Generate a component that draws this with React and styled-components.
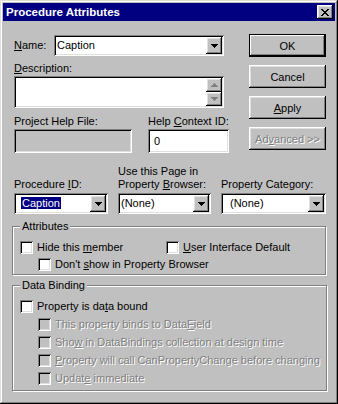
import React from 'react';
import styled, { createGlobalStyle } from 'styled-components';

const GlobalStyle = createGlobalStyle`
  html, body {
    margin: 0;
    padding: 0;
    background: #c0c0c0;
  }
  body {
    font-family: "Liberation Sans", Arial, sans-serif;
    font-size: 11px;
    color: #000;
  }
`;

const raised = `
  background: #c0c0c0;
  box-shadow: inset -1px -1px #000, inset 1px 1px #fff, inset -2px -2px #808080, inset 2px 2px #dfdfdf;
`;

const sunken = `
  box-shadow: inset 1px 1px #808080, inset -1px -1px #fff, inset 2px 2px #000, inset -2px -2px #dfdfdf;
`;

const Window = styled.div`
  width: 338px;
  height: 404px;
  box-sizing: border-box;
  padding: 3px;
  background: #c0c0c0;
  box-shadow: inset -1px -1px #000, inset 1px 1px #dfdfdf, inset -2px -2px #808080, inset 2px 2px #fff;
  display: flex;
  flex-direction: column;
`;

const TitleBar = styled.div`
  height: 18px;
  background: #000080;
  display: flex;
  align-items: center;
  justify-content: space-between;
  padding: 0 2px 0 3px;
`;

const Title = styled.span`
  color: #fff;
  font-weight: bold;
  font-size: 11.5px;
  line-height: 18px;
`;

const CloseButton = styled.span`
  ${raised}
  width: 16px;
  height: 14px;
  display: flex;
  align-items: center;
  justify-content: center;
`;

const Body = styled.div`
  flex: 1;
  padding: 14px 9px 0 9px;
  display: flex;
  flex-direction: column;
`;

const Top = styled.div`
  display: flex;
`;

const LeftCol = styled.div`
  width: 210px;
  margin-left: 2px;
  display: flex;
  flex-direction: column;
`;

const ButtonCol = styled.div`
  width: 77px;
  margin-left: auto;
  margin-top: -1px;
  display: flex;
  flex-direction: column;
  gap: 8px;
`;

const Button = styled.div`
  ${raised}
  height: 23px;
  display: flex;
  align-items: center;
  justify-content: center;
  ${p => p.$default && `
    box-shadow: inset 0 0 0 1px #000, inset -2px -2px #000, inset 2px 2px #fff, inset -3px -3px #808080;
  `}
  ${p => p.$disabled && `
    color: #808080;
    text-shadow: 1px 1px 0 #fff;
  `}
`;

const Label = styled.div`
  line-height: 13px;
  white-space: nowrap;
  ${p => p.$disabled && `
    color: #808080;
    text-shadow: 1px 1px 0 #fff;
  `}
`;

const Key = styled.u`
  text-decoration: underline;
`;

const NameRow = styled.div`
  display: flex;
  align-items: center;
  height: 21px;
  & > ${Label} {
    width: 40px;
  }
`;

const Combo = styled.div`
  ${sunken}
  background: #fff;
  box-sizing: border-box;
  height: 21px;
  padding: 2px;
  display: flex;
  align-items: center;
  flex: ${p => (p.$grow ? 1 : 'none')};
`;

const ComboText = styled.span`
  flex: 1;
  padding-left: ${p => p.$indent}px;
  line-height: 13px;
  white-space: nowrap;
`;

const Selected = styled.span`
  background: #000080;
  color: #fff;
  padding: 0 1px;
`;

const DropButton = styled.span`
  ${raised}
  width: 16px;
  height: 17px;
  display: flex;
  align-items: center;
  justify-content: center;
`;

const DescLabel = styled(Label)`
  margin-top: 6px;
`;

const TextArea = styled.div`
  ${sunken}
  background: #fff;
  box-sizing: border-box;
  height: 32px;
  margin-top: 1px;
  padding: 2px;
  display: flex;
  justify-content: flex-end;
`;

const Spin = styled.div`
  width: 16px;
  display: flex;
  flex-direction: column;
`;

const SpinButton = styled.span`
  ${raised}
  flex: 1;
  display: flex;
  align-items: center;
  justify-content: center;
`;

const HelpGrid = styled.div`
  display: grid;
  grid-template-columns: 118px 1fr;
  column-gap: 16px;
  row-gap: 1px;
  margin-top: 7px;
`;

const Field = styled.div`
  ${sunken}
  box-sizing: border-box;
  height: 24px;
  padding: 2px 2px 2px ${p => p.$indent || 3}px;
  display: flex;
  align-items: center;
  background: ${p => (p.$disabled ? '#c0c0c0' : '#fff')};
`;

const ComboGrid = styled.div`
  display: grid;
  grid-template-columns: 94px 93px 105px;
  justify-content: space-between;
  align-items: end;
  row-gap: 2px;
  margin: 12px 0 0 2px;
`;

const Group = styled.fieldset`
  margin: ${p => p.$gap}px 0 0 0;
  padding: ${p => p.$pad};
  border: 1px solid #808080;
  box-shadow: inset 1px 1px #fff, 1px 1px #fff;
  display: flex;
  flex-direction: column;
  gap: ${p => p.$rowGap}px;
`;

const Legend = styled.legend`
  padding: 0 2px;
  line-height: 13px;
  background: #c0c0c0;
`;

const Row = styled.div`
  display: flex;
  align-items: center;
  padding-left: ${p => p.$indent || 0}px;
`;

const CheckItem = styled.div`
  display: flex;
  align-items: center;
  gap: 4px;
  height: 13px;
  width: ${p => (p.$width ? `${p.$width}px` : 'auto')};
`;

const Box = styled.span`
  ${sunken}
  width: 13px;
  height: 13px;
  flex: none;
  background: ${p => (p.$disabled ? '#c0c0c0' : '#fff')};
`;

const Arrow = ({ up, color = '#000' }) => (
  <svg width="7" height="4" viewBox="0 0 7 4">
    <path d={up ? 'M3 0h1v1h1v1h1v1h1v1H0V3h1V2h1V1h1z' : 'M0 0h7v1H6v1H5v1H4v1H3V3H2V2H1V1H0z'} fill={color} />
  </svg>
);

const CloseGlyph = () => (
  <svg width="8" height="7" viewBox="0 0 8 7">
    <path
      d="M0 0h2v1H0zM6 0h2v1H6zM1 1h2v1H1zM5 1h2v1H5zM2 2h4v1H2zM3 3h2v1H3zM2 4h4v1H2zM1 5h2v1H1zM5 5h2v1H5zM0 6h2v1H0zM6 6h2v1H6z"
      fill="#000"
    />
  </svg>
);

const ComboBox = ({ children, indent = 2, grow }) => (
  <Combo $grow={grow}>
    <ComboText $indent={indent}>{children}</ComboText>
    <DropButton>
      <Arrow />
    </DropButton>
  </Combo>
);

const Check = ({ children, disabled, width }) => (
  <CheckItem $width={width}>
    <Box $disabled={disabled} />
    <Label $disabled={disabled}>{children}</Label>
  </CheckItem>
);

export default function App() {
  return (
    <>
      <GlobalStyle />
      <Window>
        <TitleBar>
          <Title>Procedure Attributes</Title>
          <CloseButton>
            <CloseGlyph />
          </CloseButton>
        </TitleBar>
        <Body>
          <Top>
            <LeftCol>
              <NameRow>
                <Label><Key>N</Key>ame:</Label>
                <ComboBox grow indent={1}>Caption</ComboBox>
              </NameRow>
              <DescLabel><Key>D</Key>escription:</DescLabel>
              <TextArea>
                <Spin>
                  <SpinButton><Arrow up color="#808080" /></SpinButton>
                  <SpinButton><Arrow color="#808080" /></SpinButton>
                </Spin>
              </TextArea>
              <HelpGrid>
                <Label>Project Help File:</Label>
                <Label>Help <Key>C</Key>ontext ID:</Label>
                <Field $disabled />
                <Field $indent={6}>0</Field>
              </HelpGrid>
            </LeftCol>
            <ButtonCol>
              <Button $default>OK</Button>
              <Button>Cancel</Button>
              <Button><Key>A</Key>pply</Button>
              <Button $disabled>Ad<Key>v</Key>anced &gt;&gt;</Button>
            </ButtonCol>
          </Top>
          <ComboGrid>
            <Label>Procedure <Key>I</Key>D:</Label>
            <Label>Use this Page in<br />Property <Key>B</Key>rowser:</Label>
            <Label>Property Cate<Key>g</Key>ory:</Label>
            <ComboBox indent={5}><Selected>Caption</Selected></ComboBox>
            <ComboBox indent={1}>(None)</ComboBox>
            <ComboBox indent={7}>(None)</ComboBox>
          </ComboGrid>
          <Group $gap={6} $pad="8px 6px 3px 7px" $rowGap={4}>
            <Legend>Attributes</Legend>
            <Row>
              <Check width={146}>Hide this <Key>m</Key>ember</Check>
              <Check><Key>U</Key>ser Interface Default</Check>
            </Row>
            <Row $indent={18}>
              <Check>Don't <Key>s</Key>how in Property Browser</Check>
            </Row>
          </Group>
          <Group $gap={4} $pad="8px 6px 5px 7px" $rowGap={5}>
            <Legend>Data Binding</Legend>
            <Row>
              <Check>Property is da<Key>t</Key>a bound</Check>
            </Row>
            <Row $indent={18}>
              <Check disabled>This property binds to Data<Key>F</Key>ield</Check>
            </Row>
            <Row $indent={18}>
              <Check disabled>Sho<Key>w</Key> in DataBindings collection at design time</Check>
            </Row>
            <Row $indent={18}>
              <Check disabled><Key>P</Key>roperty will call CanPropertyChange before changing</Check>
            </Row>
            <Row $indent={18}>
              <Check disabled>Updat<Key>e</Key> immediate</Check>
            </Row>
          </Group>
        </Body>
      </Window>
    </>
  );
}
